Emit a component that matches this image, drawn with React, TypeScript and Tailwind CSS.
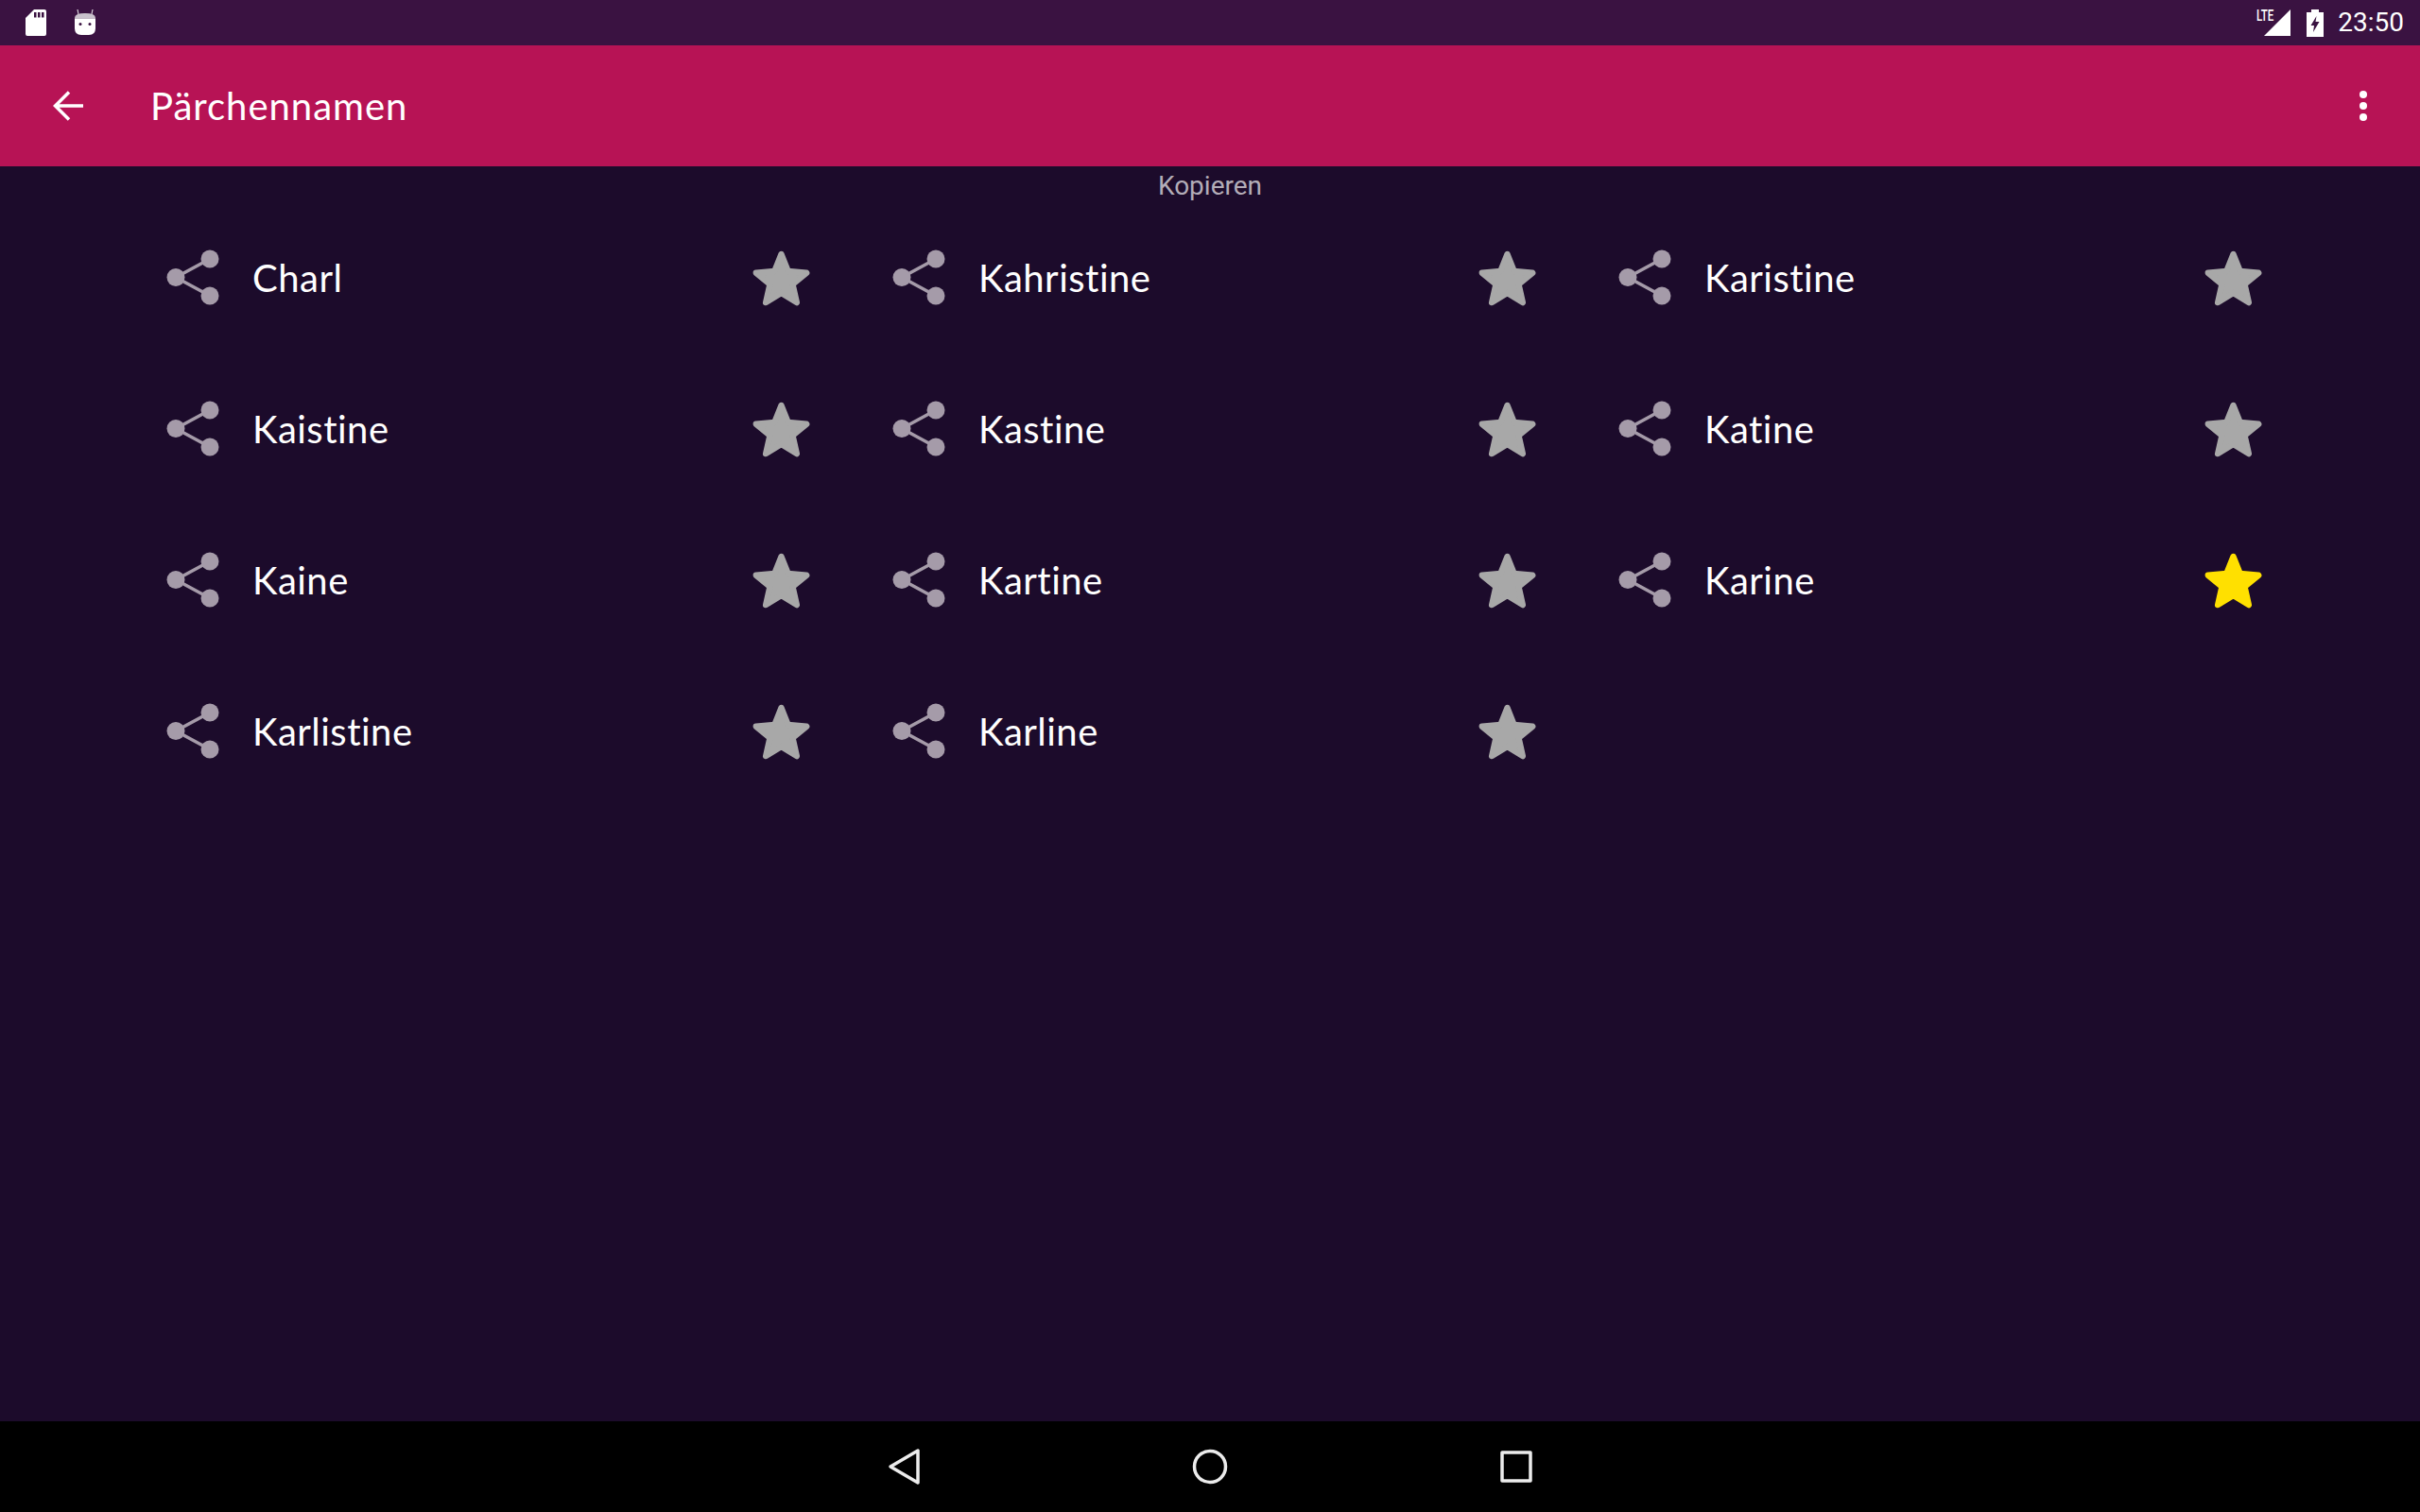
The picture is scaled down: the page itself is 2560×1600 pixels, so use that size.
const names = ["Charl", "Kahristine", "Karistine", "Kaistine", "Kastine", "Katine", "Kaine", "Kartine", "Karine", "Karlistine", "Karline"];

function ShareIcon() {
    return (
        <svg width="64" height="64" viewBox="0 0 64 64" className="shrink-0 text-[#a59ba9]">
            <path d="M50 12 L14 31.500 L50 51" fill="none" stroke="currentColor" strokeWidth="3.500" />
            <circle cx="50" cy="12" r="9.500" fill="currentColor" />
            <circle cx="14" cy="31.500" r="9.500" fill="currentColor" />
            <circle cx="50" cy="51" r="9.500" fill="currentColor" />
        </svg>
    );
}

function Star({active}: {active: boolean}) {
    return (
        <svg width="69" height="69" viewBox="0 -0.5 24 24" className={`ml-auto shrink-0 ${active ? "text-[#ffe000]" : "text-[#a8a8a8]"}`}>
            <path
                d="M12 16.900L17.700 20.400l-1.500-6.700L21.300 9.500l-6.800-.6L12 2.600 9.500 8.900 2.700 9.500l5.100 4.200L6.300 20.400z"
                fill="currentColor"
                stroke="currentColor"
                strokeWidth="2.200"
                strokeLinejoin="round"
            />
        </svg>
    );
}

function StatusBar() {
    return (
        <div className="h-12 bg-[#3a1241] flex items-center pl-[27px] pr-[17px] text-white">
            <svg width="22" height="28" viewBox="0 0 22 28" fill="currentColor">
                <path fillRule="evenodd" d="M9 0H20a2 2 0 0 1 2 2V26a2 2 0 0 1-2 2H2a2 2 0 0 1-2-2V9z M9 3V8.500H11.500V3z M13 3V8.500H15.500V3z M17 3V8.500H19.500V3z" />
            </svg>
            <svg width="24" height="28" viewBox="0 0 24 28" className="ml-[29px]">
                <path d="M5 5 L4 0 M19 5 L20 0" stroke="#d8d0da" strokeWidth="1.200" />
                <path d="M1 9 Q1 4 12 4 Q23 4 23 9 V9.500 H1z" fill="#c9c1cc" />
                <path d="M1 9.500 H23 V20 Q23 27 16 27 H8 Q1 27 1 20z" fill="white" />
                <circle cx="7" cy="15.500" r="1.500" fill="#3a1241" />
                <circle cx="17" cy="15.500" r="1.500" fill="#3a1241" />
            </svg>
            <div className="ml-auto relative w-[36px] h-[28px]">
                <svg width="36" height="28" viewBox="0 0 36 28" fill="white">
                    <path d="M36 0V28H8z" />
                </svg>
                <span className="absolute left-0 top-[-1px] text-[16px] leading-[16px] font-medium text-white font-['Roboto',sans-serif] scale-x-[0.72] origin-left">LTE</span>
            </div>
            <svg width="18" height="29" viewBox="0 0 18 29" className="ml-[17px]">
                <path fillRule="evenodd" fill="white" d="M5 0H13V3H18V29H0V3H5z M10.500 7L4.500 17H8L7 24L13.500 13H9.500z" />
            </svg>
            <span className="ml-[15px] text-[28px] leading-none text-white font-['Roboto',sans-serif]">23:50</span>
        </div>
    );
}

function Toolbar() {
    return (
        <div className="h-[128px] bg-[#b71355] flex items-center text-white">
            <svg width="32" height="32" viewBox="0 0 32 32" fill="none" stroke="white" strokeWidth="3.500" className="ml-[56px]">
                <path d="M32 16H3 M17 1.500L2.500 16L17 30.500" />
            </svg>
            <span className="ml-[71px] text-[40px] leading-none tracking-[1px] font-['Lato',sans-serif]">Pärchennamen</span>
            <div className="ml-auto mr-[56px] flex flex-col gap-1">
                <div className="w-2 h-2 rounded-full bg-white" />
                <div className="w-2 h-2 rounded-full bg-white" />
                <div className="w-2 h-2 rounded-full bg-white" />
            </div>
        </div>
    );
}

function NavBar() {
    return (
        <div className="h-24 bg-black flex items-center justify-center gap-[276px]">
            <svg width="48" height="48" viewBox="0 0 48 48" fill="none" stroke="#ececec" strokeWidth="3.500" strokeLinejoin="round">
                <path d="M39 7V41L10 24z" />
            </svg>
            <svg width="48" height="48" viewBox="0 0 48 48" fill="none" stroke="#ececec" strokeWidth="3.500">
                <circle cx="24" cy="24" r="16.500" />
            </svg>
            <svg width="48" height="48" viewBox="0 0 48 48" fill="none" stroke="#ececec" strokeWidth="3.500" strokeLinejoin="round">
                <rect x="9" y="9" width="30" height="30" />
            </svg>
        </div>
    );
}

export default function App() {
    return (
        <div className="w-[2560px] h-[1600px] flex flex-col bg-[#1c0b2b] overflow-hidden">
            <StatusBar />
            <Toolbar />
            <div className="flex-1">
                <div className="h-[38px] pt-[3px] flex items-center justify-center text-[28px] text-[#b3adb8] font-['Roboto',sans-serif]">Kopieren</div>
                <div className="grid grid-cols-3 px-32">
                    {names.map((name) => (
                        <div key={name} className="h-[160px] flex items-center pl-[44px] pr-[35px]">
                            <ShareIcon />
                            <span className="ml-[31px] text-[40px] leading-none tracking-[0.5px] text-white font-['Lato',sans-serif]">{name}</span>
                            <Star active={name === "Karine"} />
                        </div>
                    ))}
                </div>
            </div>
            <NavBar />
        </div>
    );
}
